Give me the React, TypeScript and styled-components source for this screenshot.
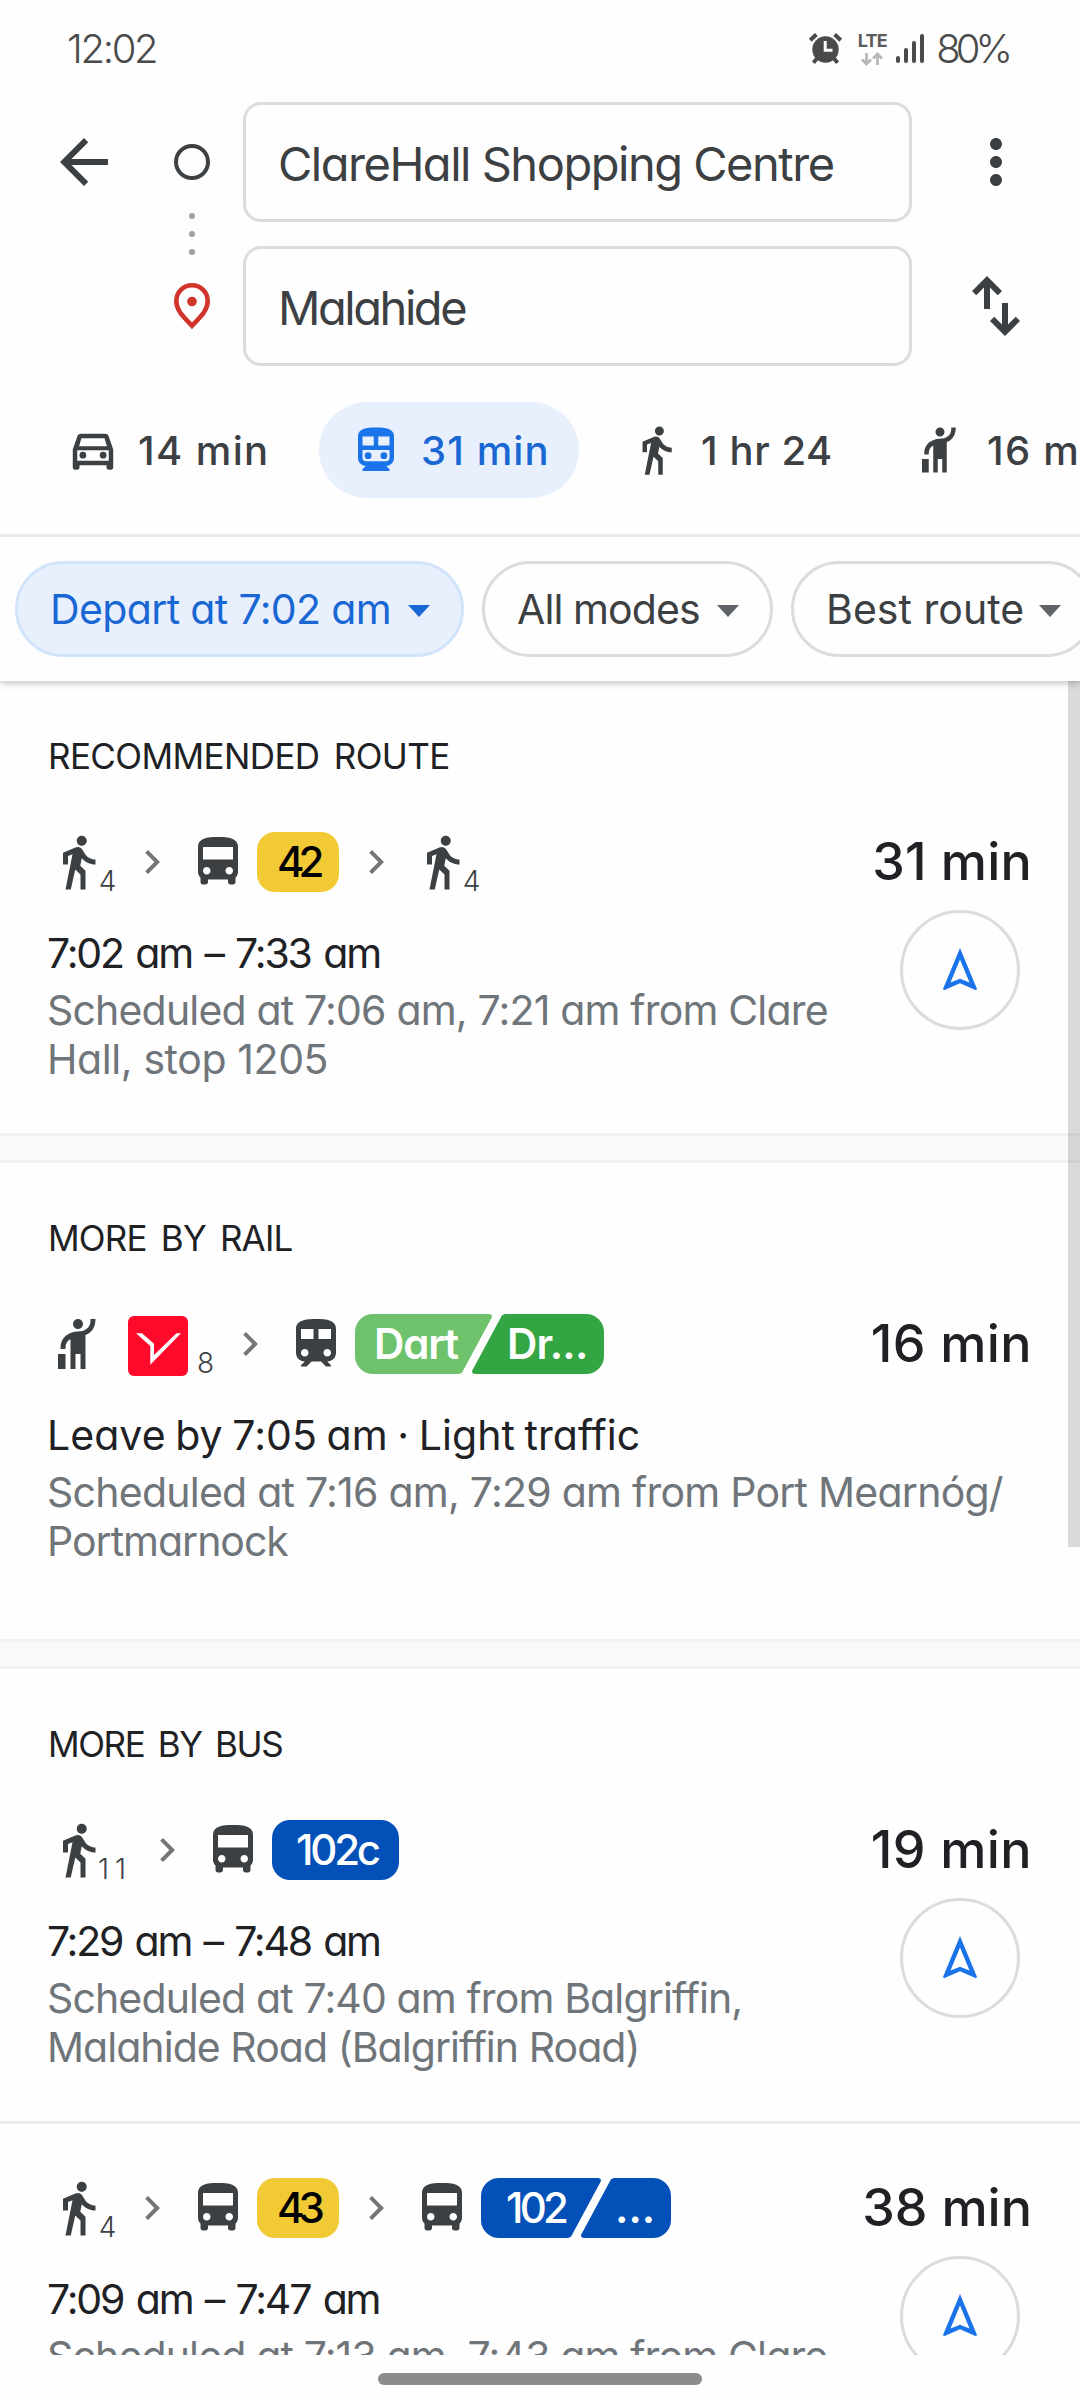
import React from "react";
import styled, { createGlobalStyle } from "styled-components";
import {
  MdArrowBack,
  MdChevronRight,
  MdDirectionsBus,
  MdDirectionsWalk,
  MdHail,
  MdMoreVert,
  MdTrain,
} from "react-icons/md";

const ink = "#3c4043";
const dark = "#202124";
const grey = "#70757a";
const line = "#dadce0";
const blue = "#1967d2";

const GlobalStyle = createGlobalStyle`
  * { box-sizing: border-box; }
  body {
    margin: 0;
    background: #fff;
    font-family: Inter, "Liberation Sans", sans-serif;
    font-feature-settings: "cv11";
  }
  svg { display: block; flex: none; }
`;

const Screen = styled.div`
  width: 1080px;
  height: 2400px;
  display: flex;
  flex-direction: column;
  overflow: hidden;
  background: #fefefe;
`;

const TopPanel = styled.header`
  position: relative;
  z-index: 1;
  flex: none;
  height: 681px;
  background: #fefefe;
  box-shadow: 0 2px 7px rgba(0, 0, 0, 0.26);
`;

const StatusBar = styled.div`
  height: 97px;
  padding: 0 72px 0 67px;
  display: flex;
  align-items: center;
  justify-content: space-between;
`;

const StatusText = styled.span<{ $track: number }>`
  font-size: 40px;
  font-weight: 330;
  line-height: 48px;
  color: #4a4a4a;
  letter-spacing: ${(p) => p.$track}px;
`;

const StatusIcons = styled.div`
  display: flex;
  align-items: center;
`;

const Network = styled.div`
  width: 30px;
  margin-left: 15px;
  display: flex;
  flex-direction: column;
  align-items: center;
  gap: 3px;
`;

const NetworkLabel = styled.span`
  font-size: 18px;
  font-weight: 700;
  line-height: 17px;
  letter-spacing: -0.8px;
  color: #5c5c5c;
`;

const SignalBars = styled.div`
  margin: 0 12px 0 9px;
  height: 29px;
  display: flex;
  align-items: flex-end;
  gap: 4px;
`;

const SignalBar = styled.i<{ $h: number }>`
  width: 4px;
  height: ${(p) => p.$h}px;
  border-radius: 2px;
  background: #4a4a4a;
`;

const SearchGrid = styled.div`
  margin-top: 5px;
  display: grid;
  grid-template-columns: 168px 48px 696px 168px;
  grid-template-rows: 120px 120px;
  row-gap: 24px;
  align-items: center;
  justify-items: center;
  color: ${ink};
`;

const Rail = styled.div`
  grid-row: 1 / span 2;
  grid-column: 2;
  align-self: stretch;
  padding-top: 42px;
  display: flex;
  flex-direction: column;
  align-items: center;
`;

const OriginRing = styled.div`
  width: 36px;
  height: 36px;
  border: 4.5px solid ${ink};
  border-radius: 50%;
`;

const RailDots = styled.div`
  margin: 33px 0 28px;
  display: flex;
  flex-direction: column;
  gap: 12px;
`;

const RailDot = styled.i`
  width: 6px;
  height: 6px;
  border-radius: 50%;
  background: #9aa0a6;
`;

const Field = styled.div<{ $row: number; $track: number }>`
  grid-row: ${(p) => p.$row};
  grid-column: 3;
  justify-self: end;
  width: 669px;
  height: 120px;
  padding: 2px 0 0 32px;
  border: 3px solid ${line};
  border-radius: 18px;
  display: flex;
  align-items: center;
  font-size: 47px;
  font-weight: 390;
  letter-spacing: ${(p) => p.$track}px;
  white-space: nowrap;
`;

const ActionSlot = styled.div<{ $row: number; $col: number }>`
  grid-row: ${(p) => p.$row};
  grid-column: ${(p) => p.$col};
`;

const ModeTabs = styled.nav`
  height: 171px;
  padding: 36px 0 0 36px;
  border-bottom: 3px solid #e8eaed;
  display: flex;
  gap: 20px;
  overflow: hidden;
`;

const ModeTab = styled.div<{ $width: number; $active?: boolean; $track: number }>`
  flex: none;
  width: ${(p) => p.$width}px;
  height: 96px;
  padding-left: 30px;
  border-radius: 48px;
  display: flex;
  align-items: center;
  gap: 18px;
  background: ${(p) => (p.$active ? "#e8f0fe" : "transparent")};
  color: ${(p) => (p.$active ? blue : ink)};
  font-size: 40px;
  font-weight: 500;
  letter-spacing: ${(p) => p.$track}px;
  white-space: nowrap;

  &:last-child { gap: 20px; }
`;

const Chips = styled.div`
  padding: 24px 0 24px 15px;
  display: flex;
  gap: 18px;
  overflow: hidden;
`;

const Chip = styled.div<{ $width: number; $active?: boolean; $track: number }>`
  flex: none;
  width: ${(p) => p.$width}px;
  height: 96px;
  padding: 0 31px 0 32px;
  border: 3px solid ${(p) => (p.$active ? "#d2e3fc" : line)};
  border-radius: 48px;
  display: flex;
  align-items: center;
  justify-content: space-between;
  background: ${(p) => (p.$active ? "#e8f0fe" : "transparent")};
  color: ${(p) => (p.$active ? blue : ink)};
  font-size: 41px;
  font-weight: 390;
  letter-spacing: ${(p) => p.$track}px;
  white-space: nowrap;
`;

const Caret = styled.i<{ $active?: boolean }>`
  margin-top: 3px;
  border: solid transparent;
  border-width: 12px 11px 0;
  border-top-color: ${(p) => (p.$active ? blue : "#5f6368")};
`;

const Results = styled.main`
  position: relative;
  flex: none;
  height: 1674px;
  overflow: hidden;
`;

const ScrollThumb = styled.div`
  position: absolute;
  top: 0;
  right: 0;
  width: 12px;
  height: 866px;
  background: rgba(0, 0, 0, 0.14);
`;

const Heading = styled.h2<{ $track: number }>`
  margin: 0;
  height: 97px;
  padding: 53px 0 0 48px;
  font-size: 35px;
  font-weight: 370;
  line-height: 44px;
  letter-spacing: ${(p) => p.$track}px;
  word-spacing: 5px;
  color: ${dark};
`;

const Band = styled.div`
  height: 30px;
  border: solid #f1f3f4;
  border-width: 3px 0;
  background: #f8f9fb;
`;

const Divider = styled.div`
  height: 3px;
  background: #ededed;
`;

const Item = styled.article<{ $bottom: number }>`
  padding: 54px 48px ${(p) => p.$bottom}px 48px;
  display: flex;
  justify-content: space-between;
`;

const Main = styled.div`
  flex: none;
  width: 780px;
`;

const Legs = styled.div`
  height: 60px;
  display: flex;
  align-items: center;
  color: ${ink};
`;

const LegMinutes = styled.span<{ $width: number; $track?: number }>`
  width: ${(p) => p.$width}px;
  margin: 38px 0 0 -9px;
  display: flex;
  justify-content: center;
  font-size: 28px;
  font-weight: 330;
  line-height: 28px;
  letter-spacing: ${(p) => p.$track ?? 0}px;
  ${Legs} > div + & { margin-left: 9px; }
`;

const NextLeg = styled(MdChevronRight)`
  margin: 0 12px;
  color: #757575;
`;

const Badge = styled.div<{ $bg: string; $fg: string; $width: number; $pad: number; $track: number }>`
  width: ${(p) => p.$width}px;
  height: 60px;
  margin: 0 1px 0 9px;
  padding-left: ${(p) => p.$pad}px;
  border-radius: 18px;
  background: ${(p) => p.$bg};
  color: ${(p) => p.$fg};
  font-size: 42px;
  font-weight: 500;
  line-height: 60px;
  letter-spacing: ${(p) => p.$track}px;
  white-space: nowrap;
`;

const SplitBadge = styled.div`
  height: 60px;
  margin-left: 9px;
  display: flex;
  color: #fff;
  font-size: 42px;
  line-height: 60px;
  white-space: nowrap;
`;

const SplitStart = styled.div<{ $bg: string; $width: number; $pad: number; $track: number; $weight: number }>`
  width: ${(p) => p.$width}px;
  padding-left: ${(p) => p.$pad}px;
  border-radius: 18px 3px 3px 18px;
  background: ${(p) => p.$bg};
  clip-path: polygon(0 0, 100% 0, 100% 3px, calc(100% - 30px) 98%, calc(100% - 33px) 100%, 0 100%);
  font-weight: ${(p) => p.$weight};
  letter-spacing: ${(p) => p.$track}px;
`;

const SplitEnd = styled(SplitStart)`
  margin-left: -20px;
  border-radius: 3px 18px 18px 3px;
  clip-path: polygon(33px 0, 100% 0, 100% 100%, 0 100%, 0 calc(100% - 3px), 30px 2%);
`;

const OperatorLogo = styled.div`
  width: 60px;
  height: 60px;
  margin: 4px 0 0 20px;
  border-radius: 6px;
  background: #ff0a2a;
`;

const Times = styled.p<{ $track: number; $words?: number }>`
  margin: 37px 0 8px -1px;
  font-size: 41px;
  font-weight: 390;
  line-height: 49px;
  letter-spacing: ${(p) => p.$track}px;
  word-spacing: ${(p) => p.$words ?? 0}px;
  color: ${dark};
  white-space: nowrap;
`;

const DetailLine = styled.span<{ $track: number }>`
  display: block;
  margin-left: -1px;
  font-size: 41px;
  font-weight: 390;
  line-height: 49px;
  letter-spacing: ${(p) => p.$track}px;
  color: ${grey};
  white-space: nowrap;
`;

const Side = styled.div`
  display: flex;
  flex-direction: column;
  align-items: flex-end;
  gap: 18px;
`;

const Duration = styled.strong<{ $track: number }>`
  font-size: 52px;
  font-weight: 500;
  line-height: 60px;
  letter-spacing: ${(p) => p.$track}px;
  color: ${dark};
  white-space: nowrap;
`;

const StartButton = styled.div`
  width: 120px;
  height: 120px;
  margin-right: 12px;
  border: 3px solid ${line};
  border-radius: 50%;
  display: flex;
  align-items: center;
  justify-content: center;
`;

const NavBar = styled.footer`
  flex: none;
  height: 45px;
  padding-top: 18px;
`;

const HomeHandle = styled.div`
  width: 324px;
  height: 12px;
  margin: 0 auto;
  border-radius: 6px;
  background: #8c8c8c;
`;

const AlarmIcon = () => (
  <svg width="33" height="32" viewBox="0 0 33 32" fill="none" stroke="#4a4a4a">
    <circle cx="16.5" cy="16.5" r="13.2" fill="#4a4a4a" stroke="none" />
    <path d="M1.2 7.2L7.4 1.6M31.8 7.2L25.6 1.6" strokeWidth="4" />
    <path d="M8 25.5L4.4 29.8M25 25.5L28.6 29.8" strokeWidth="4" />
    <path d="M16.2 8V17.3H23.5" stroke="#fefefe" strokeWidth="3" />
  </svg>
);

const DataArrows = () => (
  <svg width="22" height="14" viewBox="0 0 22 14" fill="none" stroke="#b8b8b8" strokeWidth="2.8">
    <path d="M5.5 1V12M1 7.5L5.5 12L10 7.5M16.5 13V2M12 6.5L16.5 2L21 6.5" />
  </svg>
);

const PinIcon = () => (
  <svg width="36" height="46" viewBox="0 0 36 46">
    <path
      d="M18 2.3C9.2 2.3 2.3 9 2.3 18C2.3 28.5 11.5 35.5 18 42.8C24.5 35.5 33.7 28.5 33.7 18C33.7 9 26.8 2.3 18 2.3Z"
      fill="none"
      stroke="#d0342a"
      strokeWidth="4.6"
    />
    <circle cx="18" cy="18.5" r="4.8" fill="#d0342a" />
  </svg>
);

const SwapIcon = () => (
  <svg width="72" height="72" viewBox="0 0 24 24" fill="currentColor">
    <path d="M9 2L4 7l1.41 1.41L8 5.83V13h2V5.83l2.59 2.58L14 7z" />
    <path d="M15 22l5-5-1.41-1.41L16 18.17V11h-2v7.17l-2.59-2.58L10 17z" />
  </svg>
);

const CarIcon = () => (
  <svg width="54" height="58" viewBox="0 -0.9 24 25.8" fill="currentColor">
    <path d="M18.92 5.01C18.72 4.42 18.16 4 17.5 4h-11c-.66 0-1.21.42-1.42 1.01L3 11v8c0 .55.45 1 1 1h1c.55 0 1-.45 1-1v-1h12v1c0 .55.45 1 1 1h1c.55 0 1-.45 1-1v-8l-2.08-5.99zM6.85 6h10.29l1.04 3.5H5.81L6.85 6zM19 16H5v-4.7h14V16z" transform="translate(0 .8)" />
    <circle cx="7.5" cy="14.3" r="1.5" />
    <circle cx="16.5" cy="14.3" r="1.5" />
  </svg>
);

const TransitIcon = () => (
  <svg width="54" height="54" viewBox="0 0 24 24" fill="#1a73e8" fillRule="evenodd">
    <path d="M12 2c-4.42 0-8 .5-8 4v9.5C4 17.43 5.57 19 7.5 19L6 20.5v.8h12v-.8L16.5 19c1.93 0 3.5-1.57 3.5-3.5V6c0-3.5-3.58-4-8-4zM6 6h5v4H6zM13 6h5v4h-5zM6 12h12v3.5c0 .83-.67 1.5-1.5 1.5h-9c-.83 0-1.5-.67-1.5-1.5z" />
    <circle cx="8.5" cy="14.5" r="1.5" />
    <circle cx="15.5" cy="14.5" r="1.5" />
  </svg>
);

const StartIcon = () => (
  <svg width="34" height="44" viewBox="0 0 34 44" fill="#1a73e8" fillRule="evenodd">
    <path d="M17 0L34 41L33 42.2L17 35.3L1 42.2L0 41ZM17 11.5L7.5 34.6L17 30.8L26.5 34.6Z" />
  </svg>
);

const OperatorMark = () => (
  <svg width="60" height="60" viewBox="0 0 60 60" fill="#fff">
    <path d="M8 17.3H14L26 27.8V39L48.5 17.3H53L22.3 48.8V30Z" />
  </svg>
);

const Walk = () => <MdDirectionsWalk size={60} />;
const Bus = () => <MdDirectionsBus size={60} />;
const Next = () => <NextLeg size={48} />;

const yellow = "#f2ca36";
const busBlue = "#0351b8";

type Line = { text: string; track: number; words?: number };

type RouteProps = {
  legs: React.ReactNode;
  times: Line;
  details: Line[];
  duration: Line;
  startable?: boolean;
  bottom?: number;
};

function Route({ legs, times, details, duration, startable = true, bottom = 49 }: RouteProps) {
  return (
    <Item $bottom={bottom}>
      <Main>
        <Legs>{legs}</Legs>
        <Times $track={times.track} $words={times.words}>{times.text}</Times>
        {details.map((d) => (
          <DetailLine key={d.text} $track={d.track}>
            {d.text}
          </DetailLine>
        ))}
      </Main>
      <Side>
        <Duration $track={duration.track}>{duration.text}</Duration>
        {startable && (
          <StartButton>
            <StartIcon />
          </StartButton>
        )}
      </Side>
    </Item>
  );
}

export default function App() {
  return (
    <Screen>
      <GlobalStyle />
      <TopPanel>
        <StatusBar>
          <StatusText $track={-2.3}>12:02</StatusText>
          <StatusIcons>
            <AlarmIcon />
            <Network>
              <NetworkLabel>LTE</NetworkLabel>
              <DataArrows />
            </Network>
            <SignalBars>
              {[7, 15, 22, 29].map((h) => (
                <SignalBar key={h} $h={h} />
              ))}
            </SignalBars>
            <StatusText $track={-5}>80%</StatusText>
          </StatusIcons>
        </StatusBar>

        <SearchGrid>
          <ActionSlot $row={1} $col={1}>
            <MdArrowBack size={72} />
          </ActionSlot>
          <Rail>
            <OriginRing />
            <RailDots>
              <RailDot />
              <RailDot />
              <RailDot />
            </RailDots>
            <PinIcon />
          </Rail>
          <Field $row={1} $track={-1.48}>ClareHall Shopping Centre</Field>
          <Field $row={2} $track={-2.45}>Malahide</Field>
          <ActionSlot $row={1} $col={4}>
            <MdMoreVert size={72} />
          </ActionSlot>
          <ActionSlot $row={2} $col={4}>
            <SwapIcon />
          </ActionSlot>
        </SearchGrid>

        <ModeTabs>
          <ModeTab $width={263} $track={1.4}>
            <CarIcon />14 min
          </ModeTab>
          <ModeTab $width={260} $track={1.1} $active>
            <TransitIcon />31 min
          </ModeTab>
          <ModeTab $width={264} $track={0.6}>
            <MdDirectionsWalk size={54} />1 hr 24
          </ModeTab>
          <ModeTab $width={263} $track={1.3}>
            <MdHail size={54} />16 min
          </ModeTab>
        </ModeTabs>

        <Chips>
          <Chip $width={449} $track={-0.63} $active>
            Depart at 7:02 am
            <Caret $active />
          </Chip>
          <Chip $width={291} $track={-0.9}>
            All modes
            <Caret />
          </Chip>
          <Chip $width={304} $track={0.05}>
            Best route
            <Caret />
          </Chip>
        </Chips>
      </TopPanel>

      <Results>
        <Heading $track={-0.6}>RECOMMENDED ROUTE</Heading>
        <Route
          legs={
            <>
              <Walk />
              <LegMinutes $width={17}>4</LegMinutes>
              <Next />
              <Bus />
              <Badge $bg={yellow} $fg="#000" $width={82} $pad={20} $track={-6}>42</Badge>
              <Next />
              <Walk />
              <LegMinutes $width={17}>4</LegMinutes>
            </>
          }
          times={{ text: "7:02 am – 7:33 am", track: -2.15, words: 3 }}
          details={[
            { text: "Scheduled at 7:06 am, 7:21 am from Clare", track: -0.82 },
            { text: "Hall, stop 1205", track: -0.4 },
          ]}
          duration={{ text: "31 min", track: 0.2 }}
        />
        <Band />

        <Heading $track={-0.8}>MORE BY RAIL</Heading>
        <Route
          bottom={73}
          startable={false}
          legs={
            <>
              <MdHail size={60} />
              <OperatorLogo>
                <OperatorMark />
              </OperatorLogo>
              <LegMinutes $width={17}>8</LegMinutes>
              <Next />
              <MdTrain size={60} />
              <SplitBadge>
                <SplitStart $bg="#6dc26b" $width={137} $pad={19} $track={-1.2} $weight={600}>Dart</SplitStart>
                <SplitEnd $bg="#34a543" $width={132} $pad={35} $track={-0.8} $weight={600}>Dr...</SplitEnd>
              </SplitBadge>
            </>
          }
          times={{ text: "Leave by 7:05 am · Light traffic", track: 0.06, words: -2 }}
          details={[
            { text: "Scheduled at 7:16 am, 7:29 am from Port Mearnóg/", track: -0.75 },
            { text: "Portmarnock", track: -1 },
          ]}
          duration={{ text: "16 min", track: 0.4 }}
        />
        <Band />

        <Heading $track={-1.4}>MORE BY BUS</Heading>
        <Route
          legs={
            <>
              <Walk />
              <LegMinutes $width={32} $track={6}>11</LegMinutes>
              <Next />
              <Bus />
              <Badge $bg={busBlue} $fg="#fff" $width={127} $pad={24} $track={-3.2}>102c</Badge>
            </>
          }
          times={{ text: "7:29 am – 7:48 am", track: -2.2, words: 3 }}
          details={[
            { text: "Scheduled at 7:40 am from Balgriffin,", track: -0.87 },
            { text: "Malahide Road (Balgriffin Road)", track: -0.95 },
          ]}
          duration={{ text: "19 min", track: 0.4 }}
        />
        <Divider />

        <Route
          legs={
            <>
              <Walk />
              <LegMinutes $width={17}>4</LegMinutes>
              <Next />
              <Bus />
              <Badge $bg={yellow} $fg="#000" $width={82} $pad={20} $track={-6}>43</Badge>
              <Next />
              <Bus />
              <SplitBadge>
                <SplitStart $bg={busBlue} $width={120} $pad={25} $track={-3.8} $weight={500}>102</SplitStart>
                <SplitEnd $bg={busBlue} $width={90} $pad={34} $track={0} $weight={600}>...</SplitEnd>
              </SplitBadge>
            </>
          }
          times={{ text: "7:09 am – 7:47 am", track: -2.15, words: 3 }}
          details={[
            { text: "Scheduled at 7:13 am, 7:43 am from Clare", track: -0.85 },
            { text: "Hall, stop 1205", track: -0.4 },
          ]}
          duration={{ text: "38 min", track: 0 }}
        />
        <ScrollThumb />
      </Results>

      <NavBar>
        <HomeHandle />
      </NavBar>
    </Screen>
  );
}
